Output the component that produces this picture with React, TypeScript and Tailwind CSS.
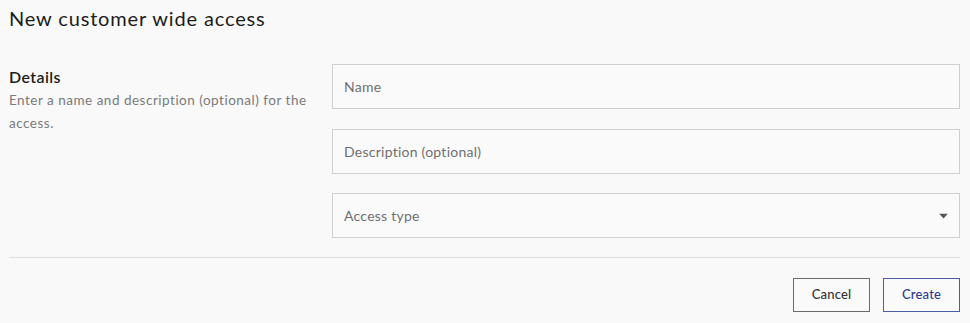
import { useState } from 'react';

export default function App() {
  const [accessType, setAccessType] = useState('');

  return (
    <div className="min-h-screen w-full bg-[#f9f9f9] pl-[9px] pr-[10px] font-['Lato',_'Noto_Sans',_sans-serif] text-[#1c1c1c]">
      {/* Header */}
      <h1 className="pt-[4px] text-[20px] leading-[28px] font-normal tracking-[0.85px]">New customer wide access</h1>

      {/* Details */}
      <div className="mt-[32px] flex">
        <div className="w-[323px] shrink-0 pr-4 pt-[1px]">
          <h2 className="text-[16px] leading-[24px] font-semibold tracking-[0.4px]">Details</h2>
          <p className="text-[13.5px] leading-[23px] tracking-[0.5px] text-[#7a7a7a]">
            Enter a name and description (optional) for the access.
          </p>
        </div>

        <div className="flex flex-1 flex-col gap-[19.5px]">
          <input
            type="text"
            placeholder="Name"
            className="h-[45px] w-full border border-[#cfcfcf] bg-[#fafafa] px-[11px] text-[14px] tracking-[0.25px] text-[#333] placeholder:text-[#6f6f6f] focus:outline-none"
          />
          <input
            type="text"
            placeholder="Description (optional)"
            className="h-[45px] w-full border border-[#cfcfcf] bg-[#fafafa] px-[11px] text-[14px] tracking-[0.25px] text-[#333] placeholder:text-[#6f6f6f] focus:outline-none"
          />
          <div className="relative">
            <select
              value={accessType}
              onChange={(e) => setAccessType(e.target.value)}
              className="h-[45px] w-full appearance-none border border-[#cfcfcf] bg-[#fafafa] px-[11px] text-[14px] tracking-[0.25px] text-[#6f6f6f] focus:outline-none"
            >
              <option value="">Access type</option>
              <option value="read">Read</option>
              <option value="write">Write</option>
            </select>
            <svg
              className="pointer-events-none absolute right-[12px] top-1/2 -translate-y-1/2"
              width="9"
              height="5"
              viewBox="0 0 9 5"
            >
              <path d="M0 0h9L4.5 5z" fill="#555" />
            </svg>
          </div>
        </div>
      </div>

      {/* Divider */}
      <div className="mt-[19px] h-px bg-[#e2e2e2]" />

      {/* Actions */}
      <div className="mt-[20px] flex justify-end gap-[13px]">
        <button className="h-[34px] w-[77px] border border-[#6b6b6b] bg-[#fafafa] text-[13px] font-medium tracking-[0.2px] text-[#333]">
          Cancel
        </button>
        <button className="h-[34px] w-[77px] border border-[#4a5ba8] bg-[#fafafa] text-[13px] font-medium tracking-[0.2px] text-[#2a3a8f]">
          Create
        </button>
      </div>
    </div>
  );
}
